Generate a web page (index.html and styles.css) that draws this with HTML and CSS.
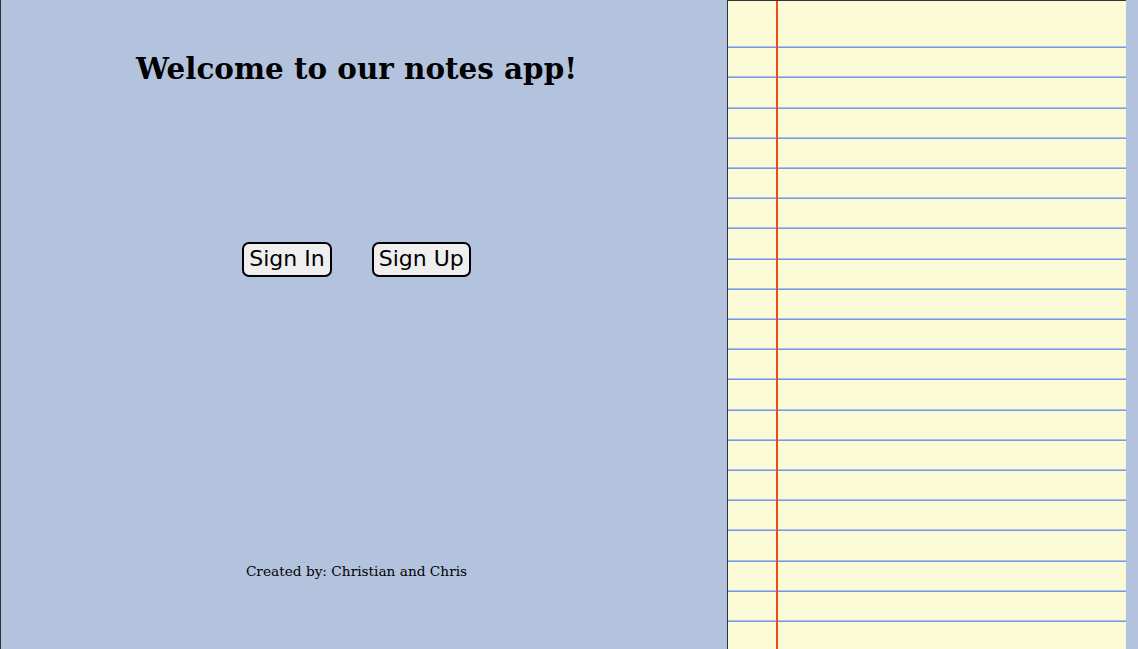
FILE: index.html
```html
<!DOCTYPE html>
<html>
<head>
<meta charset="utf-8">
<link rel="stylesheet" href="styles.css">
</head>
<body>
<div class="page">
  <main class="intro">
    <h1 class="title">Welcome to our notes app!</h1>
    <div class="actions">
      <button class="btn">Sign In</button>
      <button class="btn">Sign Up</button>
    </div>
    <p class="credits">Created by: Christian and Chris</p>
  </main>
  <aside class="notepad">
    <div class="margin-line"></div>
  </aside>
</div>
</body>
</html>
```

FILE: styles.css
```css
html, body {
  margin: 0;
  padding: 0;
  height: 100%;
}
body {
  background: #b3c3de;
  font-family: "DejaVu Serif", Georgia, serif;
}
.page {
  display: flex;
  height: 649px;
  border-left: 1px solid #333;
  box-sizing: border-box;
}
.intro {
  width: 711px;
  display: flex;
  flex-direction: column;
  align-items: center;
}
.title {
  margin: 50px 0 0;
  font-size: 29.4px;
  font-weight: bold;
  color: #000;
  line-height: 38px;
}
.actions {
  margin-top: 154px;
  display: flex;
  gap: 40px;
}
.btn {
  font-family: "DejaVu Sans", Verdana, sans-serif;
  font-size: 22px;
  line-height: 26px;
  padding: 2px 5px 3px;
  background: #efefef;
  border: 2px solid #000;
  border-radius: 7px;
  color: #000;
}
.credits {
  margin: 286px 0 0;
  font-family: "DejaVu Serif", Georgia, serif;
  font-size: 13.7px;
  color: #000;
}
.notepad {
  margin-left: 15px;
  width: 399px;
  box-sizing: border-box;
  border-left: 1px solid #333;
  border-top: 1px solid #333;
  background-color: #fafad6;
  background-image: repeating-linear-gradient(to bottom,
    transparent 0, transparent 27.2px,
    #aebfe6 27.2px, #aebfe6 28.2px,
    #7a98e8 28.2px, #7a98e8 29.2px,
    transparent 29.2px, transparent 30.2px);
  background-repeat: no-repeat;
  background-size: 100% 100%;
  background-position: 0 17.5px;
  position: relative;
}
.margin-line {
  position: absolute;
  top: 0;
  bottom: 0;
  left: 48px;
  width: 2px;
  background: #f04a1e;
}
```
